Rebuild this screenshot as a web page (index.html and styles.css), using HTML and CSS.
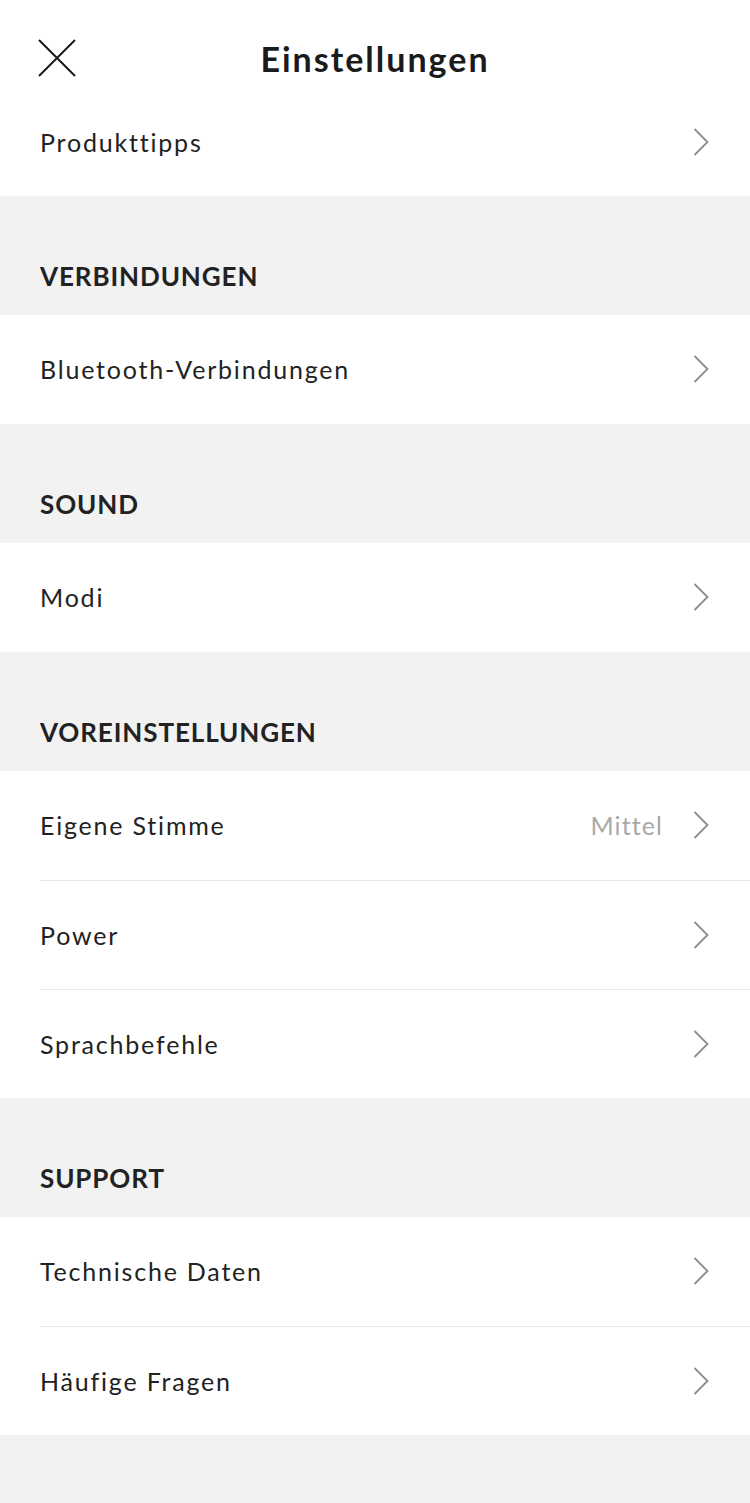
FILE: index.html
```html
<!DOCTYPE html>
<html lang="de">
<head>
<meta charset="utf-8">
<title>Einstellungen</title>
<link rel="stylesheet" href="styles.css">
</head>
<body>
<div class="screen">
  <header class="topbar">
    <button class="close" aria-label="Schließen">
      <svg width="38" height="38" viewBox="0 0 38 38"><path d="M1 1 L37 37 M37 1 L1 37" stroke="#1a1a1a" stroke-width="2" fill="none"/></svg>
    </button>
    <h1 class="title">Einstellungen</h1>
  </header>

  <div class="group group-first">
    <div class="row"><span class="label">Produkttipps</span><svg class="chev" width="16" height="28" viewBox="0 0 16 28"><polyline points="1.5,1 14.5,14 1.5,27" fill="none" stroke="#8c8c8c" stroke-width="1.8"/></svg></div>
  </div>

  <div class="section-title">VERBINDUNGEN</div>
  <div class="group">
    <div class="row"><span class="label">Bluetooth-Verbindungen</span><svg class="chev" width="16" height="28" viewBox="0 0 16 28"><polyline points="1.5,1 14.5,14 1.5,27" fill="none" stroke="#8c8c8c" stroke-width="1.8"/></svg></div>
  </div>

  <div class="section-title">SOUND</div>
  <div class="group">
    <div class="row"><span class="label">Modi</span><svg class="chev" width="16" height="28" viewBox="0 0 16 28"><polyline points="1.5,1 14.5,14 1.5,27" fill="none" stroke="#8c8c8c" stroke-width="1.8"/></svg></div>
  </div>

  <div class="section-title">VOREINSTELLUNGEN</div>
  <div class="group">
    <div class="row"><span class="label">Eigene Stimme</span><span class="value">Mittel</span><svg class="chev" width="16" height="28" viewBox="0 0 16 28"><polyline points="1.5,1 14.5,14 1.5,27" fill="none" stroke="#8c8c8c" stroke-width="1.8"/></svg></div>
    <div class="row"><span class="label">Power</span><svg class="chev" width="16" height="28" viewBox="0 0 16 28"><polyline points="1.5,1 14.5,14 1.5,27" fill="none" stroke="#8c8c8c" stroke-width="1.8"/></svg></div>
    <div class="row"><span class="label">Sprachbefehle</span><svg class="chev" width="16" height="28" viewBox="0 0 16 28"><polyline points="1.5,1 14.5,14 1.5,27" fill="none" stroke="#8c8c8c" stroke-width="1.8"/></svg></div>
  </div>

  <div class="section-title">SUPPORT</div>
  <div class="group">
    <div class="row"><span class="label">Technische Daten</span><svg class="chev" width="16" height="28" viewBox="0 0 16 28"><polyline points="1.5,1 14.5,14 1.5,27" fill="none" stroke="#8c8c8c" stroke-width="1.8"/></svg></div>
    <div class="row"><span class="label">Häufige Fragen</span><svg class="chev" width="16" height="28" viewBox="0 0 16 28"><polyline points="1.5,1 14.5,14 1.5,27" fill="none" stroke="#8c8c8c" stroke-width="1.8"/></svg></div>
  </div>
</div>
</body>
</html>
```

FILE: styles.css
```css
* { box-sizing: border-box; }
html, body { margin: 0; padding: 0; }
body {
  background: #f2f2f2;
  font-family: "Lato", "Open Sans", sans-serif;
  color: #222;
}
.screen {
  width: 750px;
  min-height: 1503px;
  background: #f2f2f2;
}
.topbar {
  height: 88px;
  background: #fff;
  display: flex;
  align-items: center;
  justify-content: center;
  position: relative;
}
.close {
  position: absolute;
  left: 38px;
  top: 39px;
  width: 38px;
  height: 38px;
  padding: 0;
  border: 0;
  background: none;
  display: block;
}
.close svg { display: block; }
.title {
  margin: 0;
  padding-top: 28px;
  font-size: 34px;
  font-weight: 700;
  color: #1a1a1a;
  letter-spacing: 2px;
}
.group {
  background: #fff;
}
.group-first .row { height: 108px; }
.row {
  height: 109px;
  margin-left: 40px;
  padding-right: 41px;
  display: flex;
  align-items: center;
  padding-bottom: 1px;
}
.row + .row { border-top: 1px solid #e6e6e6; }
.label {
  flex: 1;
  font-size: 25px;
  letter-spacing: 1.8px;
  color: #222;
}
.value {
  font-size: 25px;
  letter-spacing: 1.1px;
  color: #a8a8a8;
  margin-right: 30px;
}
.chev {
  display: block;
  flex: none;
}
.section-title {
  height: 119px;
  display: flex;
  align-items: flex-end;
  padding: 0 0 23px 40px;
  font-size: 26px;
  font-weight: 700;
  letter-spacing: 0.9px;
  color: #222;
}
```
